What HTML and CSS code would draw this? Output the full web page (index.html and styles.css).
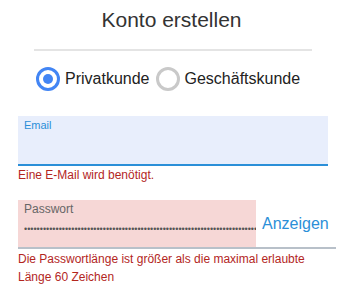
FILE: index.html
```html
<!DOCTYPE html>
<html>
<head>
	<meta charset="UTF-8">
	<title>Konto erstellen</title>
	<link rel="stylesheet" href="styles.css">
</head>
<body>
	<div class="page">
		<h1 class="title">Konto erstellen</h1>
		<div class="divider"></div>
		<div class="radios">
			<label class="radio">
				<span class="circle checked"></span>
				<span>Privatkunde</span>
			</label>
			<label class="radio">
				<span class="circle"></span>
				<span>Geschäftskunde</span>
			</label>
		</div>
		<div class="form">
			<div class="field email">
				<div class="label">Email</div>
			</div>
			<div class="error first">Eine E-Mail wird benötigt.</div>
			<div class="pw_row">
				<div class="field password">
					<div class="label">Passwort</div>
					<input type="password" value="xxxxxxxxxxxxxxxxxxxxxxxxxxxxxxxxxxxxxxxxxxxxxxxxxxxxxxxxxxxxxxxxxxxxxxxxxxxxxxxxxxxxxxxxxxxxxx">
				</div>
				<span class="show">Anzeigen</span>
			</div>
			<div class="error second">Die Passwortlänge ist größer als die maximal erlaubte Länge 60 Zeichen</div>
		</div>
	</div>
</body>
</html>
```

FILE: styles.css
```css
body{
	margin: 0;
	background: #fff;
	font-family: "Liberation Sans", Arial, sans-serif;
}
.page{
	width: 343px;
	height: 289px;
	overflow: hidden;
}
.title{
	margin: 0;
	padding-top: 8px;
	text-align: center;
	font-size: 21px;
	line-height: 24px;
	font-weight: normal;
	color: #333;
}
.divider{
	height: 2px;
	background: #e4e4e4;
	margin: 17px 31px 0 34px;
}
.radios{
	display: flex;
	align-items: center;
	height: 24px;
	margin-top: 16px;
	padding-left: 36px;
	gap: 6px;
	font-size: 16px;
	color: #222;
}
.radio{
	display: flex;
	align-items: center;
	gap: 5px;
}
.circle{
	width: 24px;
	height: 24px;
	box-sizing: border-box;
	border: 3px solid #c9c9c9;
	border-radius: 50%;
	display: flex;
	align-items: center;
	justify-content: center;
}
.circle.checked{
	border-color: #4285f4;
}
.circle.checked::after{
	content: "";
	width: 10px;
	height: 10px;
	border-radius: 50%;
	background: #4285f4;
}
.form{
	padding-left: 18px;
	margin-top: 25px;
}
.field{
	box-sizing: border-box;
}
.email{
	width: 310px;
	height: 50px;
	background: #e8eefc;
	border-bottom: 2px solid #2b8fd8;
	padding: 3px 0 0 6px;
}
.email .label{
	font-size: 11px;
	line-height: 13px;
	color: #2b8fd8;
}
.error{
	width: 310px;
	font-size: 12px;
	color: #b3261e;
}
.error.first{
	margin-top: 2px;
	line-height: 14px;
}
.pw_row{
	display: flex;
	width: 318px;
	height: 49px;
	margin-top: 18px;
	border-bottom: 2px solid #b8c0c9;
	box-sizing: border-box;
}
.password{
	width: 238px;
	background: #f6d7d6;
	padding: 2px 0 0 6px;
	overflow: hidden;
}
.password .label{
	font-size: 12px;
	line-height: 14px;
	color: #666;
}
.password input{
	display: block;
	width: 232px;
	margin: 7px 0 0 0;
	padding: 0;
	border: none;
	outline: none;
	background: transparent;
	font-family: "Liberation Sans", Arial, sans-serif;
	font-size: 9px;
	line-height: 12px;
	height: 12px;
	color: #555;
}
.show{
	display: flex;
	align-items: center;
	padding-left: 6px;
	font-size: 16px;
	color: #2b8fd8;
}
.error.second{
	margin-top: 2px;
	line-height: 17.5px;
}
```
